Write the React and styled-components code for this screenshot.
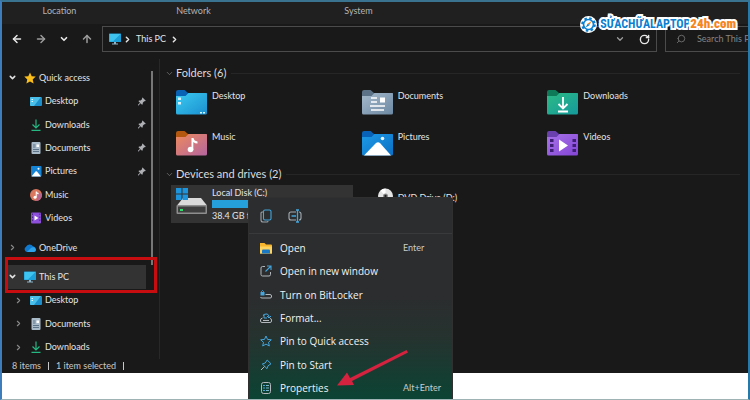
import styled, { createGlobalStyle } from 'styled-components';
import {
  ArrowLeft,
  ArrowRight,
  ArrowUp,
  ChevronDown,
  ChevronRight,
  RotateCw,
  Search,
} from 'lucide-react';

const quickAccess = [
  { name: 'Desktop', icon: DesktopIcon, pinned: true },
  { name: 'Downloads', icon: DownloadIcon, pinned: true },
  { name: 'Documents', icon: DocumentIcon, pinned: true },
  { name: 'Pictures', icon: PictureIcon, pinned: true },
  { name: 'Music', icon: MusicIcon },
  { name: 'Videos', icon: VideoIcon },
];

const thisPc = [
  { name: 'Desktop', icon: DesktopIcon },
  { name: 'Documents', icon: DocumentIcon },
  { name: 'Downloads', icon: DownloadIcon },
];

const folders = [
  { name: 'Desktop', back: '#0a62b4', from: '#3ccbf0', to: '#1a8fd0' },
  { name: 'Documents', back: '#5c7286', from: '#a5b9cb', to: '#6d89a3' },
  { name: 'Downloads', back: '#0e7a57', from: '#2dba85', to: '#159a9c' },
  { name: 'Music', back: '#b4570f', from: '#ee8a5c', to: '#b4659f' },
  { name: 'Pictures', back: '#0863b8', from: '#1d9ae6', to: '#0b6fc4' },
  { name: 'Videos', back: '#6a3fae', from: '#a873e8', to: '#8345d6' },
];

const menuItems = [
  { name: 'Open', icon: OpenIcon, shortcut: 'Enter' },
  { name: 'Open in new window', icon: NewWindowIcon },
  { name: 'Turn on BitLocker', icon: BitLockerIcon },
  { name: 'Format...', icon: FormatIcon },
  { name: 'Pin to Quick access', icon: StarIcon },
  { name: 'Pin to Start', icon: PinStartIcon },
  { name: 'Properties', icon: PropertiesIcon, shortcut: 'Alt+Enter' },
];

function App() {
  return (
    <Page>
      <GlobalStyle />
      <Explorer>
        <Ribbon>
          <span>Location</span>
          <span>Network</span>
          <span>System</span>
        </Ribbon>
        <Toolbar>
          <NavButtons>
            <IconButton aria-label="Back">
              <ArrowLeft size={12} strokeWidth={3} />
            </IconButton>
            <IconButton aria-label="Forward" $dim>
              <ArrowRight size={12} strokeWidth={3} />
            </IconButton>
            <IconButton aria-label="Recent locations">
              <ChevronDown size={10} strokeWidth={4} />
            </IconButton>
            <IconButton aria-label="Up" $dim>
              <ArrowUp size={12} strokeWidth={3} />
            </IconButton>
          </NavButtons>
          <AddressBar>
            <PcIcon />
            <ChevronRight size={9} strokeWidth={4} />
            <Crumb>This PC</Crumb>
            <ChevronRight size={9} strokeWidth={4} />
            <AddressActions>
              <IconButton aria-label="Previous locations" $dim>
                <ChevronDown size={10} strokeWidth={3} />
              </IconButton>
              <IconButton aria-label="Refresh">
                <RotateCw size={11} strokeWidth={3} />
              </IconButton>
            </AddressActions>
          </AddressBar>
          <SearchBox>
            <SearchIcon size={10} strokeWidth={2} />
            <input aria-label="Search This PC" placeholder="Search This PC" />
          </SearchBox>
        </Toolbar>
        <Body>
          <Sidebar />
          <Content />
        </Body>
        <StatusBar>
          <span>8 items</span>
          <i />
          <span>1 item selected</span>
          <i />
        </StatusBar>
      </Explorer>
      <ContextMenu />
      <Highlight />
      <Arrow viewBox="0 0 72 38">
        <path d="M70.500 1 L72 3.500 L16 32 L18 36 L1 36.500 L11 23.500 L14 29 Z" fill="#d5223f" />
      </Arrow>
      <Brand />
    </Page>
  );
}

function Sidebar() {
  return (
    <SideNav>
      <Tree>
        <TreeRow>
          <ChevronDown size={9} strokeWidth={4} />
          <GoldStar />
          <span>Quick access</span>
        </TreeRow>
        {quickAccess.map(({ name, icon: Icon, pinned }) => (
          <TreeRow key={name} $nested>
            <Blank />
            <Icon />
            <span>{name}</span>
            {pinned && <PinIcon />}
          </TreeRow>
        ))}
      </Tree>
      <Tree>
        <TreeRow>
          <ChevronRight size={9} strokeWidth={3} color="#8a8a8a" />
          <CloudIcon />
          <span>OneDrive</span>
        </TreeRow>
      </Tree>
      <Tree>
        <TreeRow $selected>
          <ChevronDown size={9} strokeWidth={4} />
          <PcIcon />
          <span>This PC</span>
        </TreeRow>
        {thisPc.map(({ name, icon: Icon }) => (
          <TreeRow key={name} $nested>
            <ChevronRight size={9} strokeWidth={3} color="#8a8a8a" />
            <Icon />
            <span>{name}</span>
          </TreeRow>
        ))}
      </Tree>
      <ScrollThumb />
    </SideNav>
  );
}

function Content() {
  return (
    <Main>
      <GroupTitle>
        <ChevronDown size={9} strokeWidth={2} color="#777" />
        Folders (6)
      </GroupTitle>
      <Grid>
        {folders.map((folder) => (
          <Tile key={folder.name}>
            <FolderIcon {...folder} />
            <span>{folder.name}</span>
          </Tile>
        ))}
      </Grid>
      <GroupTitle>
        <ChevronDown size={9} strokeWidth={2} color="#777" />
        Devices and drives (2)
      </GroupTitle>
      <Grid>
        <Drive $selected>
          <DiskIcon />
          <DriveInfo>
            <span>Local Disk (C:)</span>
            <Usage />
            <span>38.4 GB free of 118 GB</span>
          </DriveInfo>
        </Drive>
        <Drive>
          <DvdIcon />
          <span>DVD Drive (D:)</span>
        </Drive>
      </Grid>
    </Main>
  );
}

function ContextMenu() {
  return (
    <Menu>
      <MenuTools>
        <IconButton aria-label="Copy">
          <CopyIcon />
        </IconButton>
        <IconButton aria-label="Rename">
          <RenameIcon />
        </IconButton>
      </MenuTools>
      <MenuList>
        {menuItems.map(({ name, icon: Icon, shortcut }) => (
          <MenuItem key={name}>
            <Icon />
            <span>{name}</span>
            {shortcut && <small>{shortcut}</small>}
          </MenuItem>
        ))}
      </MenuList>
    </Menu>
  );
}

function Brand() {
  return (
    <BrandWrapper>
      <svg width="17" height="17" viewBox="0 0 36 36">
        <circle cx="18" cy="18" r="18" fill="#fff" />
        <circle cx="18" cy="18" r="13" fill="none" stroke="#0b7fd0" strokeWidth="5" strokeDasharray="5.200 5" />
        <circle cx="18" cy="18" r="10.500" fill="#fff" stroke="#0b7fd0" strokeWidth="3.500" />
        <path d="M24 11 L20 19.500 L16.500 16 Z" fill="#f5861f" />
        <path d="M12 24.500 L16.500 16 L20 19.500 Z" fill="#0b7fd0" />
      </svg>
      <BrandName>
        SỬACHỮALAPTOP<b>24h.com</b>
      </BrandName>
    </BrandWrapper>
  );
}

/* icons */

function FolderIcon({ name, back, from, to }) {
  const id = `folder-${name}`;
  return (
    <svg width="31" height="25" viewBox="0 0 31 25">
      <defs>
        <linearGradient id={id} x1="0" y1="0" x2="1" y2="1">
          <stop offset="0" stopColor={from} />
          <stop offset="1" stopColor={to} />
        </linearGradient>
      </defs>
      <path d="M0 2 Q0 0 2 0 H8.500 L12 3 H30 V9 H0 Z" fill={back} />
      <path d="M0 6 H9.500 L12.500 3 H30.500 Q31 3 31 4 V23 Q31 24.500 29.500 24.500 H1.500 Q0 24.500 0 23 Z" fill={`url(#${id})`} />
      {name === 'Desktop' && (
        <path d="M2 7.500 h3 v2.500 h-3z M2 12 h3 v2.500 h-3z M24 22 h2 v1.500 h-2z M27 22 h2 v1.500 h-2z" fill="#d8f4ff" />
      )}
      {name === 'Documents' && (
        <path d="M9 8 h6 M9 12 h6 M8 16 h15 M9 20 h13 M18 10 h5" stroke="#fff" strokeWidth="1.500" fill="none" />
      )}
      {name === 'Documents' && <rect x="18" y="7.500" width="5" height="5" fill="#fff" />}
      {name === 'Downloads' && (
        <path d="M16 7 V18 M11.500 14 L16 18.500 L20.500 14 M11 21.500 H21" stroke="#fff" strokeWidth="1.800" fill="none" />
      )}
      {name === 'Music' && (
        <g fill="#fff">
          <circle cx="14.500" cy="18.500" r="2.800" />
          <path d="M15.500 7 h2 q.5 3 4 3.500 v2 q-2.500 0 -4.200 -1.500 v8 h-1.800 z" />
        </g>
      )}
      {name === 'Pictures' && (
        <g fill="#fff">
          <path d="M2 24.500 L14 12 Q16 10.500 18 12 L29 24.500 Z" />
          <circle cx="20.500" cy="7.500" r="1.800" opacity="0.9" />
        </g>
      )}
      {name === 'Videos' && (
        <g>
          <path d="M12 8.500 L21 14.500 L12 20.500 Z" fill="#fff" />
          <path d="M3 8 h3.500 v3 h-3.500z M3 13 h3.500 v3 h-3.500z M3 18 h3.500 v3 h-3.500z M25.500 8 h3.500 v3 h-3.500z M25.500 13 h3.500 v3 h-3.500z M25.500 18 h3.500 v3 h-3.500z" fill="#3f1f73" />
        </g>
      )}
    </svg>
  );
}

function DiskIcon() {
  return (
    <svg width="31" height="28" viewBox="0 0 31 28">
      <path d="M7 11 H25 L31 18.500 H1 Z" fill="#dadada" />
      <rect x="0.500" y="18" width="30.500" height="9" rx="1" fill="#8e8e8e" />
      <rect x="2" y="19.500" width="27.500" height="6" fill="#3e3e3e" />
      <rect x="4" y="22" width="3" height="2" fill="#2fe06c" />
      <path d="M0 1 h5.500 v5.500 h-5.500z M6.500 1 h5.500 v5.500 h-5.500z M0 7.500 h5.500 v5.500 h-5.500z M6.500 7.500 h5.500 v5.500 h-5.500z" fill="#1d94dc" />
    </svg>
  );
}

function DvdIcon() {
  return (
    <svg width="31" height="28" viewBox="0 0 31 28">
      <path d="M7 11 H25 L31 18.500 H1 Z" fill="#bdbdbd" />
      <rect x="0.500" y="18" width="30.500" height="9" rx="1" fill="#8e8e8e" />
      <circle cx="23.500" cy="9" r="7.500" fill="#e4e4e4" />
      <path d="M23.500 9 L18.500 3.500 A7.500 7.500 0 0 1 23.500 1.500 Z" fill="#fff" />
      <circle cx="23.500" cy="9" r="2.500" fill="#8a8a8a" />
      <circle cx="23.500" cy="9" r="1.200" fill="#222" />
    </svg>
  );
}

function PcIcon() {
  return (
    <svg width="12" height="12" viewBox="0 0 12 12">
      <rect x="0" y="0.500" width="12" height="8.500" rx="0.500" fill="#1d9fd8" />
      <path d="M0.500 1 H11.500 L4 8.500 H0.500 Z" fill="#3fc4ef" />
      <path d="M5 9 h2 v1.500 h2 v1 h-6 v-1 h2 z" fill="#8fb4c8" />
    </svg>
  );
}

function DesktopIcon() {
  return (
    <svg width="12" height="12" viewBox="0 0 12 12">
      <rect x="0" y="2" width="12" height="9" rx="1" fill="#1c8fcb" />
      <path d="M1 2 H11 L4 11 H1 Q0 11 0 10 V3 Q0 2 1 2Z" fill="#49bfe9" />
      <path d="M1.500 4 h1.500 v1 h-1.500z M1.500 6 h1.500 v1 h-1.500z" fill="#e2f7ff" />
    </svg>
  );
}

function DownloadIcon() {
  return (
    <svg width="12" height="12" viewBox="0 0 12 12">
      <path d="M6 0.500 V9 M2.500 5.500 L6 9 L9.500 5.500 M1.500 11.300 H10.500" stroke="#25b883" strokeWidth="1.200" fill="none" />
    </svg>
  );
}

function DocumentIcon() {
  return (
    <svg width="12" height="12" viewBox="0 0 12 12">
      <rect x="1.500" y="0" width="9" height="12" rx="1" fill="#a9bac9" />
      <path d="M3 3 h2.500 M3 5 h2.500 M3 7.500 h6 M3 9.500 h6" stroke="#556b80" strokeWidth="0.900" />
      <rect x="6.500" y="2.500" width="2.500" height="2.500" fill="#fff" />
    </svg>
  );
}

function PictureIcon() {
  return (
    <svg width="12" height="12" viewBox="0 0 12 12">
      <rect x="1" y="1" width="10.500" height="10.500" rx="1" fill="#1583d4" />
      <path d="M1.500 11.500 L5.500 6.500 Q6.200 6 7 6.500 L11 11.500 Z" fill="#fff" />
      <circle cx="8.500" cy="3.800" r="1" fill="#fff" />
    </svg>
  );
}

function MusicIcon() {
  return (
    <svg width="12" height="12" viewBox="0 0 12 12">
      <circle cx="6" cy="6" r="6" fill="#d9775f" />
      <path d="M6 12 A6 6 0 0 0 12 6 L9 3 Z" fill="#b9658c" />
      <circle cx="5" cy="8.200" r="1.500" fill="#fff" />
      <path d="M5.700 2.500 h1 q.3 1.400 1.900 1.600 v1.100 q-1.200 0 -1.900 -.6 v3.600 h-1z" fill="#fff" />
    </svg>
  );
}

function VideoIcon() {
  return (
    <svg width="12" height="12" viewBox="0 0 12 12">
      <rect x="1" y="0.500" width="10" height="11" rx="1" fill="#8b4fd9" />
      <path d="M4.500 3.500 L8.500 6 L4.500 8.500 Z" fill="#fff" />
      <path d="M2.500 1.500 V10.500 M9.800 1.500 V10.500" stroke="#4d2790" strokeWidth="1" strokeDasharray="1.500 1.500" />
    </svg>
  );
}

function GoldStar() {
  return (
    <svg width="12" height="12" viewBox="0 0 12 12">
      <path d="M6 0.500 L7.700 4.200 L11.700 4.600 L8.700 7.400 L9.600 11.500 L6 9.400 L2.400 11.500 L3.300 7.400 L0.300 4.600 L4.300 4.200 Z" fill="#f9bd1c" />
    </svg>
  );
}

function CloudIcon() {
  return (
    <svg width="12" height="12" viewBox="0 0 12 12">
      <path d="M3 10 A2.800 2.800 0 0 1 2 4.800 A4 4 0 0 1 9 4.200 A3 3 0 0 1 9.500 10 Z" fill="#0f79cf" />
      <path d="M3 10 L7 6 A3 3 0 0 1 12 7.500 A2.500 2.500 0 0 1 9.500 10 Z" fill="#2ea5ea" />
    </svg>
  );
}

function PinIcon() {
  return (
    <svg width="8" height="9" viewBox="0 0 8 9">
      <path d="M4.500 0.500 L7.800 3.800 L7 4.300 L6.200 4.200 L4.800 5.800 L4.700 7.300 L4 7.700 L2.600 6.200 L0.500 8.400 L0 8.400 L0 7.800 L2 5.700 L0.500 4.200 L1 3.500 L2.600 3.400 L4.200 2 L4 1.100 Z" fill="#aeb0b4" />
    </svg>
  );
}

function CopyIcon() {
  return (
    <svg width="12" height="14" viewBox="0 0 12 14" fill="none">
      <path d="M3 3 H2 Q1 3 1 4 V11 Q1 13 3 13 H7 Q8 13 8 12" stroke="#9aa3aa" strokeWidth="1.100" />
      <rect x="3.500" y="1" width="7.500" height="10" rx="1.500" stroke="#45a5dc" strokeWidth="1.100" />
    </svg>
  );
}

function RenameIcon() {
  return (
    <svg width="14" height="14" viewBox="0 0 14 14" fill="none">
      <path d="M8 3 H3 Q1 3 1 5 V9 Q1 11 3 11 H8 M11 3 Q13 3 13 5 V9 Q13 11 11 11" stroke="#a5adb4" strokeWidth="1.100" />
      <path d="M8 1 H11 M9.500 1 V13 M8 13 H11 M3.500 7 H8" stroke="#45a5dc" strokeWidth="1.300" />
    </svg>
  );
}

function OpenIcon() {
  return (
    <svg width="12" height="12" viewBox="0 0 12 12">
      <path d="M0 1 H4.500 L6 2.500 H11 Q12 2.500 12 3.500 V11.500 H0 Z" fill="#f6b52d" />
      <path d="M0 4.500 H12 V11.500 H0 Z" fill="#fdd25f" />
      <path d="M2 11.500 V8.500 Q2 7.500 3 7.500 H9 Q10 7.500 10 8.500 V11.500 Z" fill="#1977c4" />
    </svg>
  );
}

function NewWindowIcon() {
  return (
    <svg width="12" height="12" viewBox="0 0 12 12" fill="none">
      <path d="M5 1.500 H2.500 Q1 1.500 1 3 V9.500 Q1 11 2.500 11 H9 Q10.500 11 10.500 9.500 V7" stroke="#b2b8bc" />
      <path d="M5.500 6.500 L11 1 M7 1 H11 V5" stroke="#45a5dc" strokeWidth="1.100" />
    </svg>
  );
}

function BitLockerIcon() {
  return (
    <svg width="12" height="12" viewBox="0 0 12 12" fill="none">
      <path d="M5.500 5.500 H10 Q11.500 5.500 11.500 7 V8 Q11.500 9 10 9 H2 Q0.500 9 0.500 8" stroke="#b2b8bc" />
      <path d="M1.500 3.500 V2.500 Q2.500 0.500 3.500 2.500 V3.500" stroke="#45a5dc" />
      <rect x="0.500" y="3" width="4" height="3.500" fill="#45a5dc" />
    </svg>
  );
}

function FormatIcon() {
  return (
    <svg width="12" height="12" viewBox="0 0 12 12" fill="none">
      <path d="M2.500 6 Q0.500 6.500 0.500 8 V9 Q0.500 10.500 2 10.500 H10 Q11.500 10.500 11.500 9 V8 Q11.500 6.500 10 6.500 M3 8.500 H9" stroke="#b2b8bc" />
      <path d="M3 4 Q4 1.500 7 2 Q9 2.500 9 5 M7 4 L9 6 L11 4 M4 2 V6 H7" stroke="#45a5dc" />
    </svg>
  );
}

function StarIcon() {
  return (
    <svg width="12" height="12" viewBox="0 0 12 12" fill="none">
      <path d="M6 1 L7.500 4.400 L11.300 4.800 L8.500 7.300 L9.300 11 L6 9.100 L2.700 11 L3.500 7.300 L0.700 4.800 L4.500 4.400 Z" stroke="#45a5dc" strokeLinejoin="round" />
    </svg>
  );
}

function PinStartIcon() {
  return (
    <svg width="12" height="12" viewBox="0 0 12 12" fill="none">
      <path d="M7.200 1 L11 4.800 L8 6.800 L7 9.700 L2.300 5 L5.200 4 Z" stroke="#45a5dc" strokeLinejoin="round" />
      <path d="M4.500 7.500 L1 11" stroke="#b2b8bc" />
    </svg>
  );
}

function PropertiesIcon() {
  return (
    <svg width="12" height="12" viewBox="0 0 12 12" fill="none">
      <rect x="1.500" y="0.500" width="9" height="11" rx="2" stroke="#b2b8bc" />
      <path d="M3 3.500 H5 M3 6 H5 M3 8.500 H5" stroke="#45a5dc" strokeWidth="1.200" />
      <path d="M6 3.500 H9 M6 6 H9 M6 8.500 H9" stroke="#7cb6c9" />
    </svg>
  );
}

export default App;

const GlobalStyle = createGlobalStyle`
  * {
    box-sizing: border-box;
  }

  body {
    margin: 0;
    background-color: #fff;
    font-family: Lato, 'Open Sans', sans-serif;
    font-size: 9px;
    line-height: 12px;
    color: #e4e4e4;
  }

  svg {
    flex-shrink: 0;
  }

  button,
  input {
    font: inherit;
    color: inherit;
  }
`;

const Page = styled.div`
  position: relative;
  min-height: 100vh;
  overflow: hidden;
  border: solid #2879a8;
  border-width: 2px 2px 1px 2px;
  border-top-color: #39738f;
  border-bottom-color: #9eb4b4;
  border-left-color: #3e7dbb;
`;

const Explorer = styled.div`
  background-color: #191919;
`;

const Ribbon = styled.div`
  display: grid;
  grid-template-columns: 115px 153px 177px 1fr;
  height: 22px;
  background-color: #202020;
  color: #b4b4b4;
  line-height: 18px;
  text-align: center;
`;

const Toolbar = styled.div`
  display: flex;
  align-items: center;
  height: 35px;
  padding-top: 2px;
  padding-bottom: 7px;
`;

const NavButtons = styled.div`
  display: flex;
  justify-content: space-between;
  width: 100px;
  padding: 0 9px;
`;

const IconButton = styled.button`
  all: unset;
  display: flex;
  align-items: center;
  color: ${(props) => (props.$dim ? '#9c9c9c' : '#e8e8e8')};
  cursor: pointer;
`;

const AddressBar = styled.div`
  display: flex;
  flex: 1;
  align-items: center;
  gap: 2px;
  height: 26px;
  padding: 0 6px;
  border: 1px solid #4b4b4b;
`;

const Crumb = styled.span`
  padding: 0 2px;
`;

const AddressActions = styled.div`
  display: flex;
  gap: 14px;
  margin-left: auto;
`;

const SearchBox = styled.label`
  display: flex;
  align-items: center;
  gap: 11px;
  width: 83px;
  height: 26px;
  margin-left: 8px;
  padding-left: 10px;
  border: 1px solid #4b4b4b;
  border-right: none;
  color: #777;

  input {
    width: 100%;
    min-width: 0;
    padding: 0;
    border: none;
    outline: none;
    background: none;
  }

  input::placeholder {
    color: #858585;
  }
`;

/* the handle of the glass points to the lower left */
const SearchIcon = styled(Search)`
  transform: scaleX(-1);
`;

const Body = styled.div`
  display: flex;
`;

const SideNav = styled.nav`
  position: relative;
  display: flex;
  flex-direction: column;
  gap: 6px;
  width: 158px;
  padding: 7px 13px 0 3px;
  border-right: 1px solid #282828;
`;

/* rows share the height of their group, a little over 23px each */
const Tree = styled.div`
  display: grid;
  grid-auto-rows: 1fr;

  &:first-child {
    min-height: 164px;
  }

  &:nth-child(3) {
    min-height: 94px;
  }
`;

const TreeRow = styled.button`
  all: unset;
  display: flex;
  align-items: center;
  gap: 3px;
  min-height: 23px;
  padding-left: ${(props) => (props.$nested ? '9px' : '3px')};
  background-color: ${(props) => (props.$selected ? '#333' : 'transparent')};
  cursor: pointer;

  svg:first-child {
    margin-right: 4px;
  }

  span:nth-child(3) {
    flex: 1;
  }
`;

const Blank = styled.span`
  width: 13px;
`;

const ScrollThumb = styled.div`
  position: absolute;
  top: 12px;
  right: 6px;
  width: 2px;
  height: 194px;
  background-color: #777;
`;

const Main = styled.main`
  flex: 1;
  padding: 6px 8px 0 5px;
`;

const GroupTitle = styled.h2`
  display: flex;
  align-items: center;
  gap: 2px;
  margin: 0;
  font-size: 11px;
  font-weight: 400;
  line-height: 16px;
  color: #dcdcdc;

  &::after {
    content: '';
    flex: 1;
    height: 1px;
    margin-left: 3px;
    background-color: #262626;
  }
`;

const Grid = styled.div`
  display: grid;
  grid-template-columns: repeat(3, 1fr);
  column-gap: 4px;
  margin-bottom: 3px;
  padding: 0 16px 0 6px;
`;

const Tile = styled.div`
  display: flex;
  gap: 5px;
  height: 41px;
  padding: 9px 0 0 5px;
`;

const Drive = styled.div`
  display: flex;
  gap: 5px;
  height: 38px;
  margin-top: 3px;
  padding: 2px 5px;
  background-color: ${(props) => (props.$selected ? '#333' : 'transparent')};

  > span {
    padding-top: 5px;
  }
`;

const DriveInfo = styled.div`
  display: flex;
  flex: 1;
  flex-direction: column;
  line-height: 11px;
  white-space: nowrap;
`;

const Usage = styled.div`
  height: 9px;
  margin: 2px 0;
  background: linear-gradient(90deg, #26a0da 68%, #4a4a4a 68%);
`;

const StatusBar = styled.footer`
  display: flex;
  align-items: center;
  gap: 7px;
  height: 14px;
  padding-left: 10px;
  color: #c8c8c8;

  i {
    width: 1px;
    height: 8px;
    background-color: #c8c8c8;
  }
`;

const Menu = styled.div`
  position: absolute;
  top: 195px;
  left: 246px;
  width: 205px;
  border: 1px solid #303030;
  border-bottom: none;
  border-radius: 4px 4px 0 0;
  background: linear-gradient(#2b2d2e 50%, #25332f 70%, #0b4434 100%);
  font-family: 'Open Sans', sans-serif;
  font-size: 10px;
`;

const MenuTools = styled.div`
  display: flex;
  gap: 16px;
  height: 36px;
  padding-left: 11px;
  border-bottom: 1px solid #383a3b;
`;

const MenuList = styled.div`
  display: grid;
  grid-auto-rows: 1fr;
  min-height: 166px;
  padding-top: 2px;
`;

const MenuItem = styled.button`
  all: unset;
  display: grid;
  grid-template-columns: 12px 115px 1fr;
  align-items: center;
  column-gap: 8px;
  padding-left: 11px;
  color: #f2f2f2;
  cursor: pointer;

  small {
    font-family: Lato, sans-serif;
    font-size: 9px;
    color: #c9cccb;
  }
`;

const Highlight = styled.div`
  position: absolute;
  top: 255px;
  left: 3px;
  width: 152px;
  height: 36px;
  border: 3px solid #c80d10;
`;

const Arrow = styled.svg`
  position: absolute;
  top: 347px;
  left: 334px;
  width: 72px;
  height: 38px;
`;

const BrandWrapper = styled.div`
  position: absolute;
  top: 12px;
  right: 12px;
  display: flex;
  align-items: center;
  gap: 3px;
`;

const BrandName = styled.span`
  font-family: 'Liberation Sans Narrow', 'Roboto Condensed', 'Liberation Sans', sans-serif;
  font-size: 12px;
  font-weight: 700;
  line-height: 20px;
  color: #0b7fd0;
  -webkit-text-stroke: 4px #fff;
  paint-order: stroke fill;

  b {
    font-size: 13px;
    color: #f5861f;
  }
`;
